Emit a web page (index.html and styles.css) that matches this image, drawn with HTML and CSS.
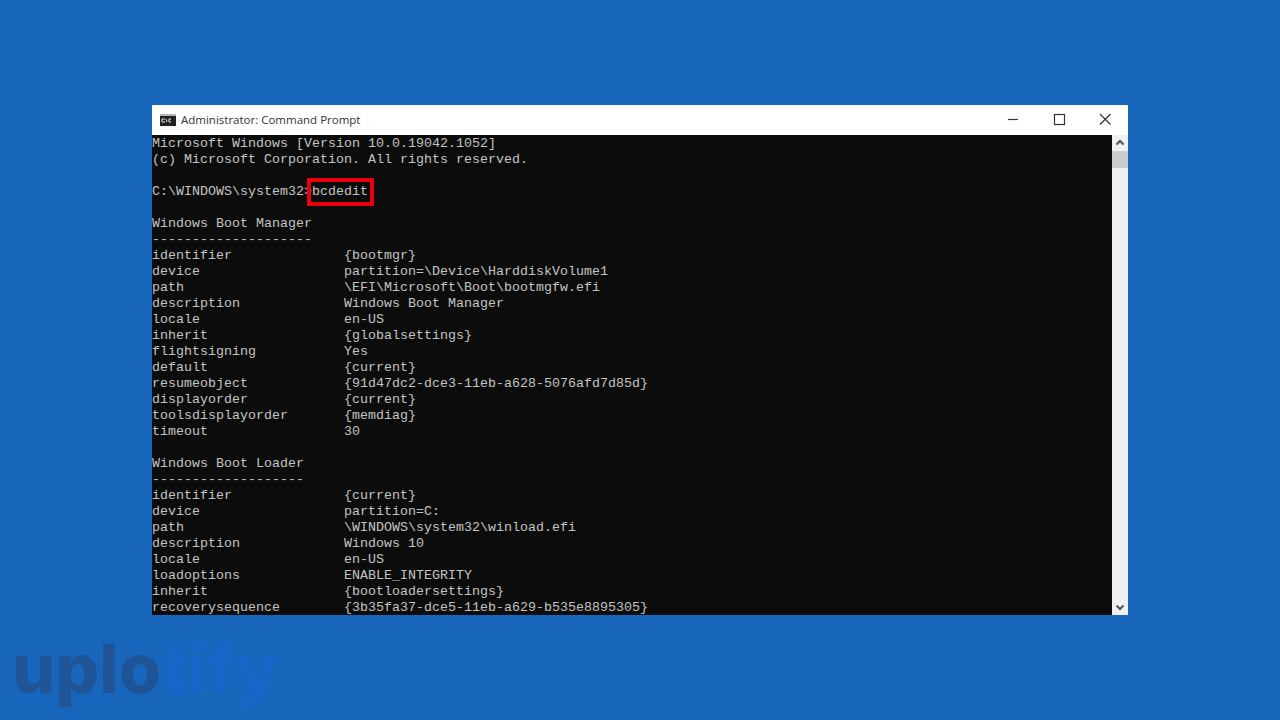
FILE: index.html
```html
<!DOCTYPE html>
<html lang="en">
<head>
<meta charset="utf-8">
<title>Administrator: Command Prompt</title>
<link rel="stylesheet" href="styles.css">
</head>
<body>
<main class="window">
  <header class="titlebar">
    <svg class="app-icon" width="16" height="12" viewBox="0 0 16 12">
      <rect x="0" y="0" width="16" height="12" fill="#222"/>
      <rect x="0" y="0" width="16" height="2" fill="#b8b8b8"/>
      <path d="M2 5h3M2 5v3h3M6 5l1 3M9 5v3M9 5h2M9 8h2" stroke="#e8e8e8" stroke-width="1" fill="none"/>
    </svg>
    <span class="title">Administrator: Command Prompt</span>
    <div class="controls">
      <svg class="ctl" width="46" height="30" viewBox="0 0 46 30"><path d="M18 14.500h10" stroke="#333" stroke-width="1.200"/></svg>
      <svg class="ctl" width="46" height="30" viewBox="0 0 46 30"><rect x="18.500" y="9.500" width="10" height="10" fill="none" stroke="#333" stroke-width="1.200"/></svg>
      <svg class="ctl" width="46" height="30" viewBox="0 0 46 30"><path d="M18 9l10.500 10.500M28.500 9L18 19.500" stroke="#333" stroke-width="1.200"/></svg>
    </div>
  </header>
  <div class="body">
<pre class="console">Microsoft Windows [Version 10.0.19042.1052]
(c) Microsoft Corporation. All rights reserved.

C:\WINDOWS\system32&gt;<span class="cmd">bcdedit</span>

Windows Boot Manager
--------------------
identifier              {bootmgr}
device                  partition=\Device\HarddiskVolume1
path                    \EFI\Microsoft\Boot\bootmgfw.efi
description             Windows Boot Manager
locale                  en-US
inherit                 {globalsettings}
flightsigning           Yes
default                 {current}
resumeobject            {91d47dc2-dce3-11eb-a628-5076afd7d85d}
displayorder            {current}
toolsdisplayorder       {memdiag}
timeout                 30

Windows Boot Loader
-------------------
identifier              {current}
device                  partition=C:
path                    \WINDOWS\system32\winload.efi
description             Windows 10
locale                  en-US
loadoptions             ENABLE_INTEGRITY
inherit                 {bootloadersettings}
recoverysequence        {3b35fa37-dce5-11eb-a629-b535e8895305}</pre>
    <div class="scrollbar">
      <svg width="16" height="16" viewBox="0 0 16 16"><path d="M4.500 9.500L8 6l3.500 3.500" fill="none" stroke="#555" stroke-width="2"/></svg>
      <div class="thumb"></div>
      <div class="track"></div>
      <svg width="16" height="16" viewBox="0 0 16 16"><path d="M4.500 6.500L8 10l3.500-3.500" fill="none" stroke="#555" stroke-width="2"/></svg>
    </div>
  </div>
</main>
<div class="logo"><span class="logo-dark">uplo</span><span class="logo-light">tify</span></div>
</body>
</html>
```
FILE: styles.css
```css
html, body { margin: 0; height: 720px; overflow: hidden; }
body {
  background: #1766bb;
  padding: 105px 0 0 152px;
  box-sizing: border-box;
  position: relative;
}
.window { width: 976px; height: 510px; display: flex; flex-direction: column; background: #fff; }
.titlebar {
  height: 30px;
  flex: none;
  display: flex;
  align-items: center;
  background: #fff;
  color: #333;
}
.app-icon { margin-left: 8px; margin-right: 5px; margin-top: -1px; }
.title { flex: 1; font: 11.5px "Open Sans", "Noto Sans", sans-serif; margin-top: -1px; }
.controls { display: flex; }
.ctl { display: block; }
.body { flex: 1; display: flex; min-height: 0; }
.console {
  flex: 1;
  margin: 0;
  padding-top: 1px;
  background: #0c0c0c;
  color: #c4c4c4;
  font: 13.333px/16px "Liberation Mono", monospace;
  overflow: hidden;
}
.cmd { position: relative; }
.cmd::after {
  content: "";
  position: absolute;
  left: -5px; right: -6px; top: -6px; bottom: -7px;
  border: 4px solid #e8000c;
}
.scrollbar { width: 16px; flex: none; background: #f0f0f0; display: flex; flex-direction: column; }
.thumb { height: 17px; background: #cdcdcd; }
.track { flex: 1; }
.logo {
  position: absolute;
  left: 12px;
  top: 628px;
  font: 800 68px/80px Inter, sans-serif;
  letter-spacing: 0.4px;
}
.logo-dark { color: #1f5496; }
.logo-light { color: #1865c8; }
```
